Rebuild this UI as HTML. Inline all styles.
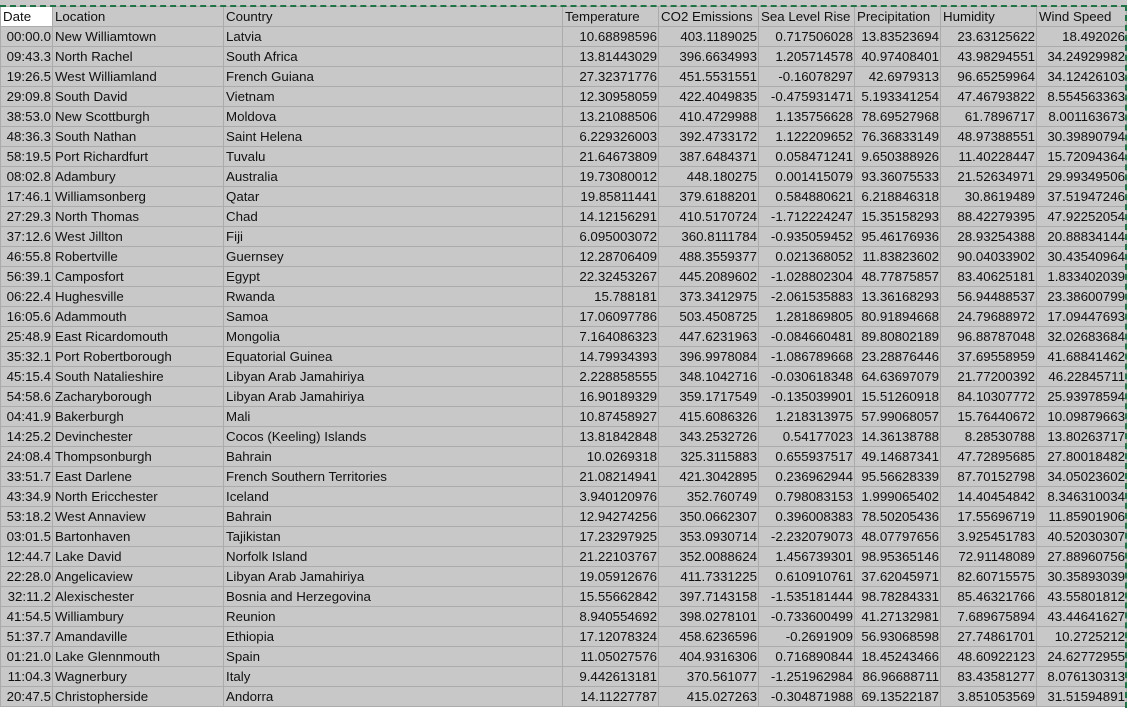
<!DOCTYPE html>
<html><head><meta charset="utf-8"><style>
html,body{margin:0;padding:0;width:1129px;height:708px;overflow:hidden;background:#fff;}
.wrap{position:absolute;left:0;top:0;width:1129px;height:708px;overflow:hidden;}
.top{position:absolute;left:0;top:0;width:1127px;height:6px;background:#c8c8c8;}
table{position:absolute;left:0;top:6px;border-collapse:collapse;table-layout:fixed;font-family:"Liberation Sans",sans-serif;font-size:13.3px;color:#111;background:#c8c8c8;}
td{height:19px;padding:1px 1px 0 2px;border:1px solid #ababab;white-space:nowrap;overflow:hidden;line-height:18px;box-sizing:border-box;}
tr{height:20px;}
td.n{text-align:right;}
tr.h td{text-align:left;}
.dash{position:absolute;border-color:#217346;border-style:dashed;}
</style></head><body><div class="wrap">
<div class="top"></div>
<table>
<colgroup><col style="width:52px"><col style="width:171px"><col style="width:339px"><col style="width:96px"><col style="width:100px"><col style="width:96px"><col style="width:86px"><col style="width:96px"><col style="width:90px"></colgroup>
<tr class="h"><td style="background:#fff">Date</td><td>Location</td><td>Country</td><td>Temperature</td><td>CO2 Emissions</td><td>Sea Level Rise</td><td>Precipitation</td><td>Humidity</td><td>Wind Speed</td></tr>
<tr><td class="n">00:00.0</td><td>New Williamtown</td><td>Latvia</td><td class="n">10.68898596</td><td class="n">403.1189025</td><td class="n">0.717506028</td><td class="n">13.83523694</td><td class="n">23.63125622</td><td class="n">18.492026</td></tr>
<tr><td class="n">09:43.3</td><td>North Rachel</td><td>South Africa</td><td class="n">13.81443029</td><td class="n">396.6634993</td><td class="n">1.205714578</td><td class="n">40.97408401</td><td class="n">43.98294551</td><td class="n">34.24929982</td></tr>
<tr><td class="n">19:26.5</td><td>West Williamland</td><td>French Guiana</td><td class="n">27.32371776</td><td class="n">451.5531551</td><td class="n">-0.16078297</td><td class="n">42.6979313</td><td class="n">96.65259964</td><td class="n">34.12426103</td></tr>
<tr><td class="n">29:09.8</td><td>South David</td><td>Vietnam</td><td class="n">12.30958059</td><td class="n">422.4049835</td><td class="n">-0.475931471</td><td class="n">5.193341254</td><td class="n">47.46793822</td><td class="n">8.554563363</td></tr>
<tr><td class="n">38:53.0</td><td>New Scottburgh</td><td>Moldova</td><td class="n">13.21088506</td><td class="n">410.4729988</td><td class="n">1.135756628</td><td class="n">78.69527968</td><td class="n">61.7896717</td><td class="n">8.001163673</td></tr>
<tr><td class="n">48:36.3</td><td>South Nathan</td><td>Saint Helena</td><td class="n">6.229326003</td><td class="n">392.4733172</td><td class="n">1.122209652</td><td class="n">76.36833149</td><td class="n">48.97388551</td><td class="n">30.39890794</td></tr>
<tr><td class="n">58:19.5</td><td>Port Richardfurt</td><td>Tuvalu</td><td class="n">21.64673809</td><td class="n">387.6484371</td><td class="n">0.058471241</td><td class="n">9.650388926</td><td class="n">11.40228447</td><td class="n">15.72094364</td></tr>
<tr><td class="n">08:02.8</td><td>Adambury</td><td>Australia</td><td class="n">19.73080012</td><td class="n">448.180275</td><td class="n">0.001415079</td><td class="n">93.36075533</td><td class="n">21.52634971</td><td class="n">29.99349506</td></tr>
<tr><td class="n">17:46.1</td><td>Williamsonberg</td><td>Qatar</td><td class="n">19.85811441</td><td class="n">379.6188201</td><td class="n">0.584880621</td><td class="n">6.218846318</td><td class="n">30.8619489</td><td class="n">37.51947246</td></tr>
<tr><td class="n">27:29.3</td><td>North Thomas</td><td>Chad</td><td class="n">14.12156291</td><td class="n">410.5170724</td><td class="n">-1.712224247</td><td class="n">15.35158293</td><td class="n">88.42279395</td><td class="n">47.92252054</td></tr>
<tr><td class="n">37:12.6</td><td>West Jillton</td><td>Fiji</td><td class="n">6.095003072</td><td class="n">360.8111784</td><td class="n">-0.935059452</td><td class="n">95.46176936</td><td class="n">28.93254388</td><td class="n">20.88834144</td></tr>
<tr><td class="n">46:55.8</td><td>Robertville</td><td>Guernsey</td><td class="n">12.28706409</td><td class="n">488.3559377</td><td class="n">0.021368052</td><td class="n">11.83823602</td><td class="n">90.04033902</td><td class="n">30.43540964</td></tr>
<tr><td class="n">56:39.1</td><td>Camposfort</td><td>Egypt</td><td class="n">22.32453267</td><td class="n">445.2089602</td><td class="n">-1.028802304</td><td class="n">48.77875857</td><td class="n">83.40625181</td><td class="n">1.833402039</td></tr>
<tr><td class="n">06:22.4</td><td>Hughesville</td><td>Rwanda</td><td class="n">15.788181</td><td class="n">373.3412975</td><td class="n">-2.061535883</td><td class="n">13.36168293</td><td class="n">56.94488537</td><td class="n">23.38600799</td></tr>
<tr><td class="n">16:05.6</td><td>Adammouth</td><td>Samoa</td><td class="n">17.06097786</td><td class="n">503.4508725</td><td class="n">1.281869805</td><td class="n">80.91894668</td><td class="n">24.79688972</td><td class="n">17.09447693</td></tr>
<tr><td class="n">25:48.9</td><td>East Ricardomouth</td><td>Mongolia</td><td class="n">7.164086323</td><td class="n">447.6231963</td><td class="n">-0.084660481</td><td class="n">89.80802189</td><td class="n">96.88787048</td><td class="n">32.02683684</td></tr>
<tr><td class="n">35:32.1</td><td>Port Robertborough</td><td>Equatorial Guinea</td><td class="n">14.79934393</td><td class="n">396.9978084</td><td class="n">-1.086789668</td><td class="n">23.28876446</td><td class="n">37.69558959</td><td class="n">41.68841462</td></tr>
<tr><td class="n">45:15.4</td><td>South Natalieshire</td><td>Libyan Arab Jamahiriya</td><td class="n">2.228858555</td><td class="n">348.1042716</td><td class="n">-0.030618348</td><td class="n">64.63697079</td><td class="n">21.77200392</td><td class="n">46.22845711</td></tr>
<tr><td class="n">54:58.6</td><td>Zacharyborough</td><td>Libyan Arab Jamahiriya</td><td class="n">16.90189329</td><td class="n">359.1717549</td><td class="n">-0.135039901</td><td class="n">15.51260918</td><td class="n">84.10307772</td><td class="n">25.93978594</td></tr>
<tr><td class="n">04:41.9</td><td>Bakerburgh</td><td>Mali</td><td class="n">10.87458927</td><td class="n">415.6086326</td><td class="n">1.218313975</td><td class="n">57.99068057</td><td class="n">15.76440672</td><td class="n">10.09879663</td></tr>
<tr><td class="n">14:25.2</td><td>Devinchester</td><td>Cocos (Keeling) Islands</td><td class="n">13.81842848</td><td class="n">343.2532726</td><td class="n">0.54177023</td><td class="n">14.36138788</td><td class="n">8.28530788</td><td class="n">13.80263717</td></tr>
<tr><td class="n">24:08.4</td><td>Thompsonburgh</td><td>Bahrain</td><td class="n">10.0269318</td><td class="n">325.3115883</td><td class="n">0.655937517</td><td class="n">49.14687341</td><td class="n">47.72895685</td><td class="n">27.80018482</td></tr>
<tr><td class="n">33:51.7</td><td>East Darlene</td><td>French Southern Territories</td><td class="n">21.08214941</td><td class="n">421.3042895</td><td class="n">0.236962944</td><td class="n">95.56628339</td><td class="n">87.70152798</td><td class="n">34.05023602</td></tr>
<tr><td class="n">43:34.9</td><td>North Ericchester</td><td>Iceland</td><td class="n">3.940120976</td><td class="n">352.760749</td><td class="n">0.798083153</td><td class="n">1.999065402</td><td class="n">14.40454842</td><td class="n">8.346310034</td></tr>
<tr><td class="n">53:18.2</td><td>West Annaview</td><td>Bahrain</td><td class="n">12.94274256</td><td class="n">350.0662307</td><td class="n">0.396008383</td><td class="n">78.50205436</td><td class="n">17.55696719</td><td class="n">11.85901906</td></tr>
<tr><td class="n">03:01.5</td><td>Bartonhaven</td><td>Tajikistan</td><td class="n">17.23297925</td><td class="n">353.0930714</td><td class="n">-2.232079073</td><td class="n">48.07797656</td><td class="n">3.925451783</td><td class="n">40.52030307</td></tr>
<tr><td class="n">12:44.7</td><td>Lake David</td><td>Norfolk Island</td><td class="n">21.22103767</td><td class="n">352.0088624</td><td class="n">1.456739301</td><td class="n">98.95365146</td><td class="n">72.91148089</td><td class="n">27.88960756</td></tr>
<tr><td class="n">22:28.0</td><td>Angelicaview</td><td>Libyan Arab Jamahiriya</td><td class="n">19.05912676</td><td class="n">411.7331225</td><td class="n">0.610910761</td><td class="n">37.62045971</td><td class="n">82.60715575</td><td class="n">30.35893039</td></tr>
<tr><td class="n">32:11.2</td><td>Alexischester</td><td>Bosnia and Herzegovina</td><td class="n">15.55662842</td><td class="n">397.7143158</td><td class="n">-1.535181444</td><td class="n">98.78284331</td><td class="n">85.46321766</td><td class="n">43.55801812</td></tr>
<tr><td class="n">41:54.5</td><td>Williambury</td><td>Reunion</td><td class="n">8.940554692</td><td class="n">398.0278101</td><td class="n">-0.733600499</td><td class="n">41.27132981</td><td class="n">7.689675894</td><td class="n">43.44641627</td></tr>
<tr><td class="n">51:37.7</td><td>Amandaville</td><td>Ethiopia</td><td class="n">17.12078324</td><td class="n">458.6236596</td><td class="n">-0.2691909</td><td class="n">56.93068598</td><td class="n">27.74861701</td><td class="n">10.2725212</td></tr>
<tr><td class="n">01:21.0</td><td>Lake Glennmouth</td><td>Spain</td><td class="n">11.05027576</td><td class="n">404.9316306</td><td class="n">0.716890844</td><td class="n">18.45243466</td><td class="n">48.60922123</td><td class="n">24.62772955</td></tr>
<tr><td class="n">11:04.3</td><td>Wagnerbury</td><td>Italy</td><td class="n">9.442613181</td><td class="n">370.561077</td><td class="n">-1.251962984</td><td class="n">86.96688711</td><td class="n">83.43581277</td><td class="n">8.076130313</td></tr>
<tr><td class="n">20:47.5</td><td>Christopherside</td><td>Andorra</td><td class="n">14.11227787</td><td class="n">415.027263</td><td class="n">-0.304871988</td><td class="n">69.13522187</td><td class="n">3.851053569</td><td class="n">31.51594891</td></tr>
</table>
<div class="dash" style="left:0;top:5px;width:1127px;height:0;border-width:2px 0 0 0;"></div>
<div class="dash" style="left:1125px;top:5px;width:0;height:703px;border-width:0 0 0 2px;"></div>
</div></body></html>
